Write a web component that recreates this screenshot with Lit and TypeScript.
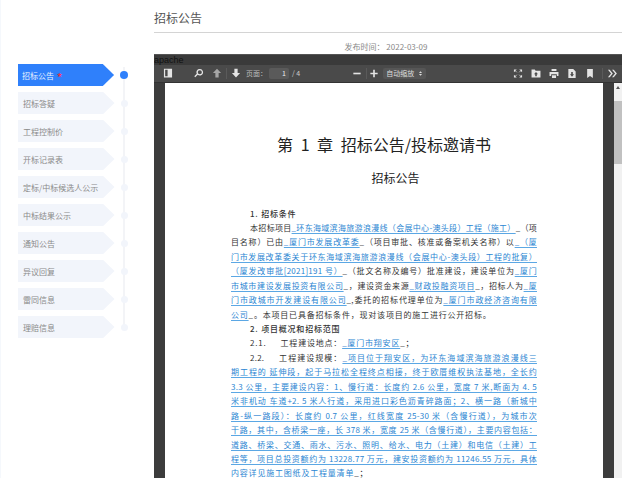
import { LitElement, html, css, svg } from 'lit';
import { customElement, property } from 'lit/decorators.js';

const STEPS = ['招标公告', '招标答疑', '工程控制价', '开标记录表', '定标/中标候选人公示', '中标结果公示', '通知公告', '异议回复', '雷同信息', '理赔信息'];

const ICONS = {
  sidebar: svg`<path d="M3 2h10v11H3z M4.500 3.500v8h3v-8z" fill-rule="evenodd"/>`,
  search: svg`<path d="M9 2.500a4 4 0 1 1-2.600 7l-3 3-1.200-1.200 3-3A4 4 0 0 1 9 2.500z M9 4a2.500 2.500 0 1 0 0 5 2.500 2.500 0 0 0 0-5z" fill-rule="evenodd"/>`,
  up: svg`<path d="M8 2l5 5.500h-3V13H6V7.500H3z" opacity="0.6"/>`,
  down: svg`<path d="M6 2h4v5.500h3L8 13 3 7.500h3z"/>`,
  minus: svg`<path d="M3.500 7h9v2h-9z"/>`,
  plus: svg`<path d="M7 3.500h2V7h3.500v2H9v3.500H7V9H3.500V7H7z"/>`,
  full: svg`<path d="M3 3h3.500L3 6.500z M13 3v3.500L9.500 3z M3 13v-3.500L6.500 13z M13 13H9.500L13 9.500z"/><path d="M5 5l1.500 1.500M11 5L9.500 6.500M5 11l1.500-1.500M11 11L9.500 9.500" stroke="currentColor"/>`,
  open: svg`<path d="M2.500 3h4l1 1.500h6V13h-11z M8 6l-2.500 3H7v2.500h2V9h1.500z" fill-rule="evenodd"/>`,
  print: svg`<path d="M5 2.500h6V5H5z M2.500 6h11v5H11.500V9h-7v2H2.500z M5.500 10h5v3.500h-5z"/>`,
  save: svg`<path d="M3.500 2.500h6l3 3v8h-9z M7 6v3H5.500L8 12l2.500-3H9V6z" fill-rule="evenodd"/>`,
  mark: svg`<path d="M4.500 2.500h7v11L8 11l-3.500 2.500z"/>`,
  more: svg`<path d="M3 3.500h2.200L9 8l-3.800 4.500H3L6.800 8z M8 3.500h2.200L14 8l-3.800 4.500H8L11.800 8z"/>`,
  updown: svg`<path d="M8 3l3.500 4h-7z M8 13l-3.500-4h7z"/>`,
};

@customElement('step-nav')
export class StepNav extends LitElement {
  @property({ type: Array }) steps: string[] = [];

  static styles = css`
    :host {
      display: block;
      width: 154px;
      flex: none;
      box-sizing: border-box;
      padding: 61px 0 0 17px;
      font-family: 'Noto Sans CJK SC', 'Noto Sans', sans-serif;
      border-left: 1px solid #f5f8fc;
    }
    .list {
      position: relative;
      width: 110px;
    }
    .list::before {
      content: '';
      position: absolute;
      left: 105px;
      top: 6px;
      bottom: 14px;
      width: 2px;
      background: #f3f4f7;
    }
    .row {
      position: relative;
      height: 28px;
      display: flex;
      align-items: center;
    }
    .tag {
      width: 97px;
      height: 22.500px;
      box-sizing: border-box;
      padding-left: 5px;
      display: flex;
      align-items: center;
      font-size: 8px;
      color: #8a8a8a;
      background: #f2f5fb;
      clip-path: polygon(0 0, 88% 0, 100% 50%, 88% 100%, 0 100%);
    }
    .dot {
      width: 7px;
      height: 7px;
      margin-left: 6.500px;
      border-radius: 50%;
      background: #f2f5fb;
    }
    .on .tag {
      background: #2f80fb;
      color: #e8f1ff;
      padding-left: 4px;
    }
    .on .dot {
      width: 8px;
      height: 8px;
      margin-left: 6px;
      background: #2f80fb;
    }
    .star {
      color: #f0304f;
      font-size: 10px;
      font-weight: 700;
      line-height: 10px;
      padding-top: 3px;
      margin-left: 3px;
    }
  `;

  render() {
    return html`
      <div class="list">
        ${this.steps.map((s, i) => html`
          <div class="row ${i === 0 ? 'on' : ''}">
            <div class="tag">${s}${i === 0 ? html`<span class="star">*</span>` : ''}</div>
            <div class="dot"></div>
          </div>
        `)}
      </div>
    `;
  }
}

@customElement('pdf-viewer')
export class PdfViewer extends LitElement {
  static styles = css`
    :host {
      display: flex;
      flex-direction: column;
      flex: 1;
      min-height: 0;
      background: #3c3c3c;
      font-family: 'Noto Sans CJK SC', 'Noto Sans', sans-serif;
      overflow: hidden;
      border-top: 1px solid #555;
    }
    .name {
      height: 10px;
      line-height: 10px;
      font-size: 9px;
      font-family: 'Liberation Sans', sans-serif;
      color: #111;
      background: #3a3a3a;
    }
    .bar {
      height: 16.500px;
      flex: none;
      display: flex;
      align-items: center;
      padding-left: 5px;
      background: #4a4a4a;
      border-bottom: 1px solid #333;
      color: #e4e4e4;
      font-size: 7px;
    }
    .bar svg {
      width: 13px;
      height: 13px;
      fill: currentColor;
      display: block;
      padding: 0 2.500px;
      flex: none;
    }
    .sep {
      width: 1px;
      height: 11px;
      background: #5a5a5a;
      flex: none;
    }
    .gap-13 {
      width: 13px;
      flex: none;
    }
    .label {
      margin-left: 1px;
      color: #bbb;
      width: 23px;
    }
    .num {
      width: 20px;
      height: 11px;
      line-height: 11px;
      box-sizing: border-box;
      text-align: right;
      padding-right: 3px;
      background: #5a5a5a;
      border-radius: 2px;
      color: #eee;
    }
    .of {
      margin-left: 3px;
      color: #ccc;
    }
    .mid {
      margin-left: 48px;
      display: flex;
      align-items: center;
    }
    .mid .sep {
      margin-right: -2px;
    }
    .select {
      width: 43px;
      height: 11px;
      line-height: 11px;
      box-sizing: border-box;
      padding: 0 2px 0 3px;
      background: #565656;
      border-radius: 2px;
      color: #ddd;
      display: flex;
      align-items: center;
      justify-content: space-between;
    }
    .bar .select svg {
      width: 7px;
      height: 7px;
      padding: 0;
    }
    .right {
      margin-left: auto;
      display: flex;
      align-items: center;
      padding-right: 1px;
    }
    .right .sep {
      margin-left: 3px;
    }
    .body {
      flex: 1;
      min-height: 0;
      display: flex;
      padding-left: 11px;
      overflow: hidden;
    }
    .page {
      width: 438px;
      flex: none;
      box-sizing: border-box;
      padding: 0 66px;
      background: #fff;
      color: #333;
      font-size: 8px;
      line-height: 14.450px;
      letter-spacing: 0.250px;
    }
    h1 {
      margin: 50px 0 0;
      font-size: 16px;
      line-height: 22px;
      font-weight: 400;
      text-align: center;
      color: #222;
      letter-spacing: 0;
      word-spacing: 4px;
    }
    h2 {
      margin: 13px 0 0;
      padding-left: 23px;
      font-size: 12px;
      line-height: 20px;
      font-weight: 400;
      text-align: center;
      color: #222;
      letter-spacing: 0;
    }
    .sec {
      margin: 19px 0 0;
      padding-left: 19px;
      font-weight: 500;
      letter-spacing: 0.800px;
    }
    .l {
      height: 14.450px;
      overflow: hidden;
      text-align: justify;
      text-align-last: justify;
    }
    .in {
      padding-left: 19px;
    }
    .end {
      text-align-last: left;
      letter-spacing: 0.800px;
    }
    .sec.tight {
      margin: 0;
    }
    .gap {
      display: inline-block;
      width: 14px;
    }
    u {
      color: #2a85d2;
      text-decoration: underline 1px #5ba7e4;
      text-underline-offset: 2px;
    }
    .scroll {
      width: 8px;
      margin-left: 11px;
      flex: none;
      background: #f1f1f1;
      display: flex;
      flex-direction: column;
      align-items: center;
    }
    .arrow {
      margin-top: 3px;
      width: 0;
      height: 0;
      border: 2px solid transparent;
      border-top: 0;
      border-bottom: 3px solid #555;
    }
    .thumb {
      margin-top: 12px;
      width: 100%;
      height: 63px;
      background: #c1c1c1;
    }
  `;

  private icon(name: keyof typeof ICONS) {
    return html`<svg viewBox="0 0 16 16">${ICONS[name]}</svg>`;
  }

  render() {
    return html`
      <div class="name">apache</div>
      <div class="bar">
        ${this.icon('sidebar')}
        <span class="gap-13"></span>
        ${this.icon('search')}
        ${this.icon('up')}
        <div class="sep"></div>
        ${this.icon('down')}
        <span class="label">页面：</span>
        <span class="num">1</span>
        <span class="of">/ 4</span>
        <div class="mid">
          ${this.icon('minus')}
          <div class="sep"></div>
          ${this.icon('plus')}
          <div class="select"><span>自动缩放</span>${this.icon('updown')}</div>
        </div>
        <div class="right">
          ${this.icon('full')}
          ${this.icon('open')}
          ${this.icon('print')}
          ${this.icon('save')}
          ${this.icon('mark')}
          <div class="sep"></div>
          ${this.icon('more')}
        </div>
      </div>
      <div class="body">
        <div class="page">
          <h1>第 1 章 招标公告/投标邀请书</h1>
          <h2>招标公告</h2>
          <div class="sec">1. 招标条件</div>
          <div class="l in">本招标项目<u>_环东海域滨海旅游浪漫线（会展中心-澳头段）工程（施工）</u>_（项</div>
          <div class="l">目名称）已由<u>_厦门市发展改革委</u>_（项目审批、核准或备案机关名称）以<u>_（厦</u></div>
          <div class="l"><u>门市发展改革委关于环东海域滨海旅游浪漫线（会展中心-澳头段）工程的批复）</u></div>
          <div class="l"><u>（厦发改审批[2021]191 号）</u>_（批文名称及编号）批准建设，建设单位为<u>_厦门</u></div>
          <div class="l"><u>市城市建设发展投资有限公司</u>_，建设资金来源<u>_财政投融资项目</u>_，招标人为<u>_厦</u></div>
          <div class="l"><u>门市政城市开发建设有限公司</u>_,委托的招标代理单位为<u>_厦门市政经济咨询有限</u></div>
          <div class="l end"><u>公司</u>_。本项目已具备招标条件，现对该项目的施工进行公开招标。</div>
          <div class="sec tight">2. 项目概况和招标范围</div>
          <div class="l in end">2.1.<span class="gap"></span>工程建设地点：<u>_厦门市翔安区</u>_；</div>
          <div class="l in">2.2.<span class="gap"></span>工程建设规模：<u>_项目位于翔安区，为环东海域滨海旅游浪漫线三</u></div>
          <div class="l"><u>期工程的 延伸段，起于马拉松全程终点相接，终于欧厝维权执法基地，全长约</u></div>
          <div class="l"><u>3.3 公里，主要建设内容：1、慢行道：长度约 2.6 公里，宽度 7 米,断面为 4. 5</u></div>
          <div class="l"><u>米非机动 车道+2. 5 米人行道，采用进口彩色沥青碎路面；2、横一路（新城中</u></div>
          <div class="l"><u>路-纵一路段）：长度约 0.7 公里，红线宽度 25-30 米（含慢行道），为城市次</u></div>
          <div class="l"><u>干路，其中，含桥梁一座，长 378 米，宽度 25 米（含慢行道），主要内容包括：</u></div>
          <div class="l"><u>道路、桥梁、交通、雨水、污水、照明、给水、电力（土建）和电信（土建）工</u></div>
          <div class="l"><u>程等，项目总投资额约为 13228.77 万元，建安投资额约为 11246.55 万元，具体</u></div>
          <div class="l end"><u>内容详见施工图纸及工程量清单</u>_；</div>
        </div>
        <div class="scroll">
          <div class="arrow"></div>
          <div class="thumb"></div>
        </div>
      </div>
    `;
  }
}

@customElement('app-root')
export class AppRoot extends LitElement {
  static styles = css`
    :host {
      display: flex;
      height: 478px;
      overflow: hidden;
      background: #fff;
    }
    main {
      width: 468px;
      flex: none;
      display: flex;
      flex-direction: column;
      font-family: 'Noto Sans CJK SC', 'Noto Sans', sans-serif;
    }
    .title {
      height: 33px;
      box-sizing: border-box;
      padding-top: 9px;
      line-height: 18px;
      font-size: 12px;
      color: #555;
      border-bottom: 1px solid #d4d4d4;
      flex: none;
    }
    .time {
      height: 21px;
      padding-right: 4px;
      line-height: 27px;
      text-align: center;
      font-size: 8px;
      color: #888;
      flex: none;
    }
  `;

  render() {
    return html`
      <step-nav .steps=${STEPS}></step-nav>
      <main>
        <div class="title">招标公告</div>
        <div class="time">发布时间： 2022-03-09</div>
        <pdf-viewer></pdf-viewer>
      </main>
    `;
  }
}
